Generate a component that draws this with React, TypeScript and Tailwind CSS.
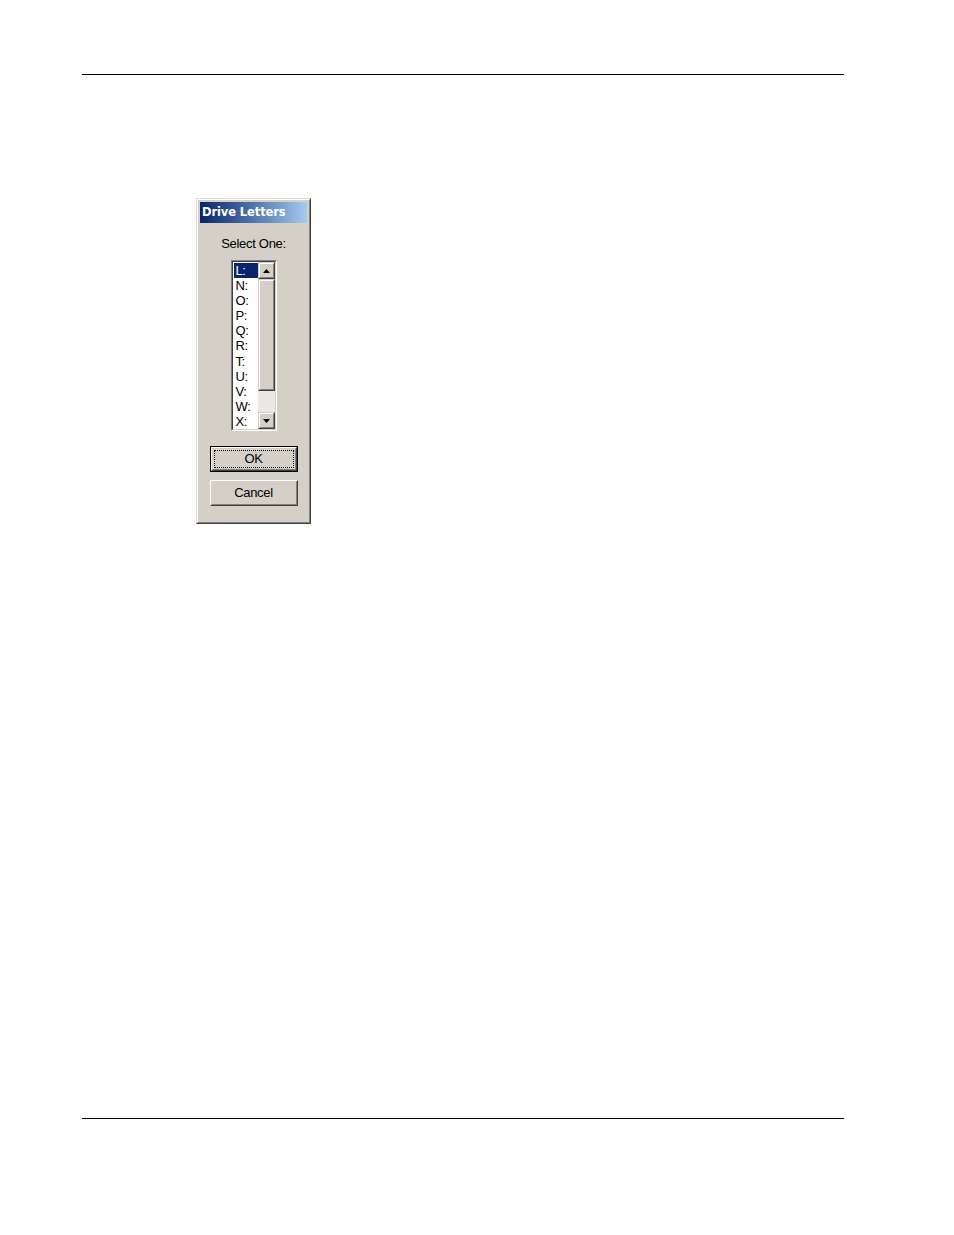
const drives = ["L:", "N:", "O:", "P:", "Q:", "R:", "T:", "U:", "V:", "W:", "X:"]

const sans = "font-['Liberation_Sans',Arial,sans-serif]"

function Arrow({ down }: { down?: boolean }) {
  return (
    <svg width="7" height="4" viewBox="0 0 7 4" className={down ? "rotate-180" : ""}>
      <path d="M3.5 0 L7 4 L0 4 Z" fill="#000" />
    </svg>
  )
}

function ScrollButton({ down }: { down?: boolean }) {
  return (
    <div className="h-[17px] w-[17px] border border-t-[#d4d0c8] border-l-[#d4d0c8] border-r-[#404040] border-b-[#404040]">
      <div className="flex h-full w-full items-center justify-center border border-t-white border-l-white border-r-[#808080] border-b-[#808080] bg-[#d4d0c8]">
        <Arrow down={down} />
      </div>
    </div>
  )
}

function DriveLetters() {
  return (
    <div className="w-[115px] border border-t-[#dcdad5] border-l-[#dcdad5] border-r-[#404040] border-b-[#404040]">
      <div className="border border-t-white border-l-white border-r-[#808080] border-b-[#808080] bg-[#d4d0c8] p-[2px]">
        <div className="flex h-[21px] items-center bg-gradient-to-r from-[#0a246a] to-[#a6caf0] pl-[2px] pt-[1px]">
          <span className="font-['DejaVu_Sans',sans-serif] text-[11.5px] font-bold tracking-[-0.1px] text-white">
            Drive Letters
          </span>
        </div>

        <div className="flex flex-col items-center pb-[14px]">
          <p className={`mt-[12px] ${sans} text-[13px] leading-[17px] tracking-[-0.3px] text-black`}>
            Select One:
          </p>

          <div className="mt-[8px] h-[171px] w-[46px] border border-t-[#808080] border-l-[#808080] border-r-white border-b-white">
            <div className="flex h-full border border-t-[#404040] border-l-[#404040] border-r-[#d4d0c8] border-b-[#d4d0c8] bg-white">
              <ul className={`flex-1 pt-[1px] pl-[1px] ${sans} text-[13px] leading-[15.1px] tracking-[-0.4px] text-black`}>
                {drives.map((d, i) => (
                  <li
                    key={d}
                    className={i === 0 ? "bg-[#0a246a] pl-[2px] text-white" : "pl-[2px]"}
                  >
                    {d}
                  </li>
                ))}
              </ul>
              <div className="flex w-[17px] flex-col">
                <ScrollButton />
                <div className="h-[112px] border border-t-[#d4d0c8] border-l-[#d4d0c8] border-r-[#404040] border-b-[#404040]">
                  <div className="h-full border border-t-white border-l-white border-r-[#808080] border-b-[#808080] bg-[#d4d0c8]" />
                </div>
                <div className="flex-1 bg-[#eae8e4]" />
                <ScrollButton down />
              </div>
            </div>
          </div>

          <button className="mt-[15px] h-[26px] w-[88px] border border-black">
            <div className="h-full w-full border border-t-white border-l-white border-r-[#404040] border-b-[#404040]">
              <div className="flex h-full w-full items-center justify-center border border-t-[#d4d0c8] border-l-[#d4d0c8] border-r-[#808080] border-b-[#808080] bg-[#d4d0c8] p-[1px]">
                <div className={`flex h-full w-full items-center justify-center border border-dotted border-black ${sans} text-[13px] tracking-[-0.3px] text-black`}>
                  OK
                </div>
              </div>
            </div>
          </button>

          <button className="mt-[8px] h-[26px] w-[88px] border border-t-white border-l-white border-r-[#404040] border-b-[#404040]">
            <div className={`flex h-full w-full items-center justify-center border border-t-[#d4d0c8] border-l-[#d4d0c8] border-r-[#808080] border-b-[#808080] bg-[#d4d0c8] ${sans} text-[13px] tracking-[-0.3px] text-black`}>
              Cancel
            </div>
          </button>
        </div>
      </div>
    </div>
  )
}

export default function App() {
  return (
    <div className="min-h-[1235px] w-[954px] bg-white px-[82px] pt-[74px]">
      <div className="w-[762px] border-t border-black" />
      <div className="ml-[114px] mt-[123px]">
        <DriveLetters />
      </div>
      <div className="mt-[594px] w-[762px] border-t border-black" />
    </div>
  )
}
